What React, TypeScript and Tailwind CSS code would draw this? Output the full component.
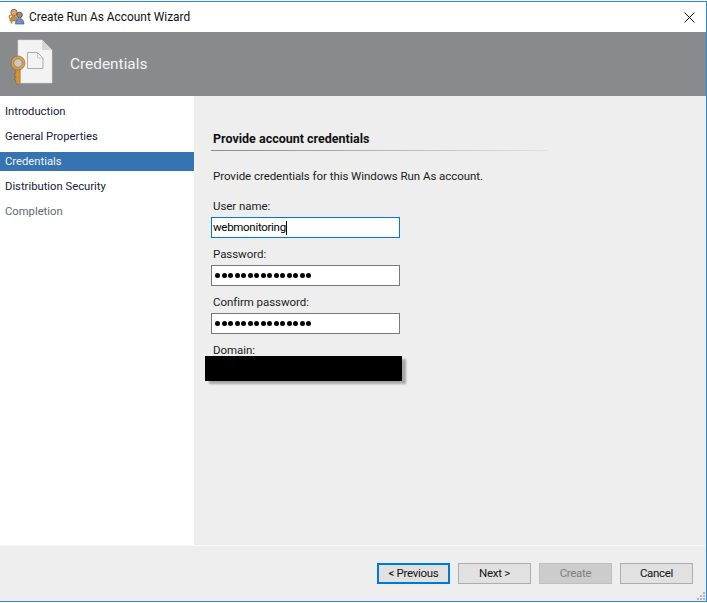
const font = { fontFamily: 'Roboto, "Noto Sans", sans-serif' };

const steps = ["Introduction", "General Properties", "Credentials", "Distribution Security", "Completion"];

function WizardIcon() {
  return (
    <svg width="17" height="17" viewBox="0 0 17 17" className="shrink-0">
      <circle cx="6" cy="4.500" r="3.200" fill="#d8a878" stroke="#7d5a34" strokeWidth="0.8" />
      <path d="M2 13c0-3 1.500-4.800 4-4.800s3.600 1.600 3.600 4.800z" fill="#b9925f" stroke="#7d5a34" strokeWidth="0.6" />
      <circle cx="11.500" cy="7" r="2.800" fill="#a98870" stroke="#4a4040" strokeWidth="0.8" />
      <path d="M7.500 16c0-3.600 1.600-5.500 4-5.500s4.500 1.900 4.500 5.500z" fill="#6d93c4" stroke="#3f5f8c" strokeWidth="0.7" />
      <circle cx="3.500" cy="9" r="2.200" fill="none" stroke="#c58a2a" strokeWidth="1.300" />
      <path d="M3.500 11.200v4.300" stroke="#c58a2a" strokeWidth="1.600" />
    </svg>
  );
}

function HeaderIcon() {
  return (
    <svg width="46" height="48" viewBox="0 0 46 48" className="shrink-0">
      <path d="M9 1h24l10 10v33H9z" fill="#f3f3f3" stroke="#d4d4d4" strokeWidth="0.5" />
      <path d="M33 1v10h10z" fill="#d6d6d6" />
      <path d="M18.500 13.500h10l5.500 5.500v10.500H18.500z" fill="#f3f3f3" stroke="#a9abad" strokeWidth="1" />
      <path d="M28.500 13.500v5.500H34" fill="none" stroke="#c0c2c4" strokeWidth="0.8" />
      <path d="M6.800 29h4.400v14.500L9 46l-2.200-2.200v-3h-1.300v-2h1.300v-2h-1.300v-2h1.300z" fill="#d6933a" stroke="#8f5f20" strokeWidth="0.6" />
      <circle cx="9" cy="24" r="5.600" fill="none" stroke="#d9a050" strokeWidth="2.600" />
      <circle cx="9" cy="24" r="7" fill="none" stroke="#8f5f20" strokeWidth="0.6" />
      <circle cx="9" cy="24" r="4.200" fill="#c9c9c9" stroke="#8f5f20" strokeWidth="0.6" />
    </svg>
  );
}

function Field({ label, value, focused, secret }: { label: string; value: string; focused?: boolean; secret?: boolean }) {
  return (
    <div className="flex flex-col">
      <div className="h-[20px] pl-[2px] text-[11.5px] leading-[19px] tracking-[-0.05px] text-[#1c1c1c]">{label}</div>
      <div
        className={`flex h-[21px] w-[189px] items-center border bg-white pl-[1px] text-[11.5px] tracking-[-0.3px] text-black ${
          focused ? "border-[#0078d7]" : "border-[#7a7a7a]"
        }`}
      >
        {secret ? (
          <span className="flex gap-[1.500px] pl-[2px]">
            {Array.from({ length: 15 }).map((_, i) => (
              <span key={i} className="h-[5px] w-[5px] rounded-full bg-black" />
            ))}
          </span>
        ) : (
          value
        )}
        {focused && <span className="h-[14px] w-px bg-black" />}
      </div>
    </div>
  );
}

function WizardButton({ label, primary, disabled }: { label: string; primary?: boolean; disabled?: boolean }) {
  return (
    <div
      className={`flex h-[21px] w-[73px] items-center justify-center pt-px text-[11.5px] tracking-[-0.3px] ${
        primary
          ? "border-2 border-[#0078d7] bg-[#e1e1e1] text-[#111]"
          : disabled
            ? "border border-[#bfbfbf] bg-[#cccccc] text-[#808080]"
            : "border border-[#adadad] bg-[#e1e1e1] text-[#111]"
      }`}
    >
      {label}
    </div>
  );
}

export default function App() {
  return (
    <div className="relative h-[603px] w-[707px] bg-white pt-px" style={font}>
      <div className="flex h-[601px] flex-col border-t border-r border-b border-[#2b88d8]">
        <div className="flex h-[30px] shrink-0 items-center justify-between bg-white pr-[11px] pl-[8px]">
          <div className="flex items-center gap-[4px]">
            <WizardIcon />
            <span className="pt-px text-[11.9px] text-[#111]">Create Run As Account Wizard</span>
          </div>
          <svg width="11" height="11" viewBox="0 0 11 11">
            <path d="M.5.5l10 10M10.500.5l-10 10" stroke="#111" strokeWidth="1" fill="none" />
          </svg>
        </div>

        <div className="flex h-[64px] shrink-0 items-start bg-[#888b8d] pt-[7px] pl-[9px]">
          <HeaderIcon />
          <span className="mt-[15px] ml-[15px] text-[15.4px] leading-[20px] text-[#eef4f8]">Credentials</span>
        </div>

        <div className="flex min-h-0 flex-1 border-b border-[#f8f8f8]">
          <div className="flex w-[194px] shrink-0 flex-col gap-[6px] bg-white pt-[6px]">
            {steps.map((step) => (
              <div
                key={step}
                className={`flex h-[19px] items-center pt-px pl-[5px] text-[11.25px] ${
                  step === "Credentials"
                    ? "bg-[#3574b0] text-[#eef3f8]"
                    : step === "Completion"
                      ? "text-[#5c6c70]"
                      : "text-[#152238]"
                }`}
              >
                {step}
              </div>
            ))}
          </div>

          <div className="flex-1 bg-[#eeeeee] pt-[33px] pl-[17px]">
            <div className="h-[21px] w-[337px] pl-[2px] text-[12.5px] leading-[20px] font-bold text-[#111]">
              Provide account credentials
            </div>
            <div className="h-px w-[337px] bg-gradient-to-r from-[#8a8a8a] to-[#e2e2e2]" />
            <div className="mt-[17px] pl-[2px] text-[11.5px] leading-[17px] tracking-[-0.05px] text-[#1c1c1c]">
              Provide credentials for this Windows Run As account.
            </div>
            <div className="mt-[12px] flex flex-col gap-[7px]">
              <Field label="User name:" value="webmonitoring" focused />
              <Field label="Password:" value="" secret />
              <Field label="Confirm password:" value="" secret />
              <div className="pl-[2px] text-[11.5px] leading-[19px] tracking-[-0.05px] text-[#1c1c1c]">Domain:</div>
            </div>
          </div>
        </div>

        <div className="flex h-[55px] shrink-0 items-start justify-end gap-[8px] bg-[#eeeeee] pt-[17px] pr-[13px]">
          <WizardButton label="< Previous" primary />
          <WizardButton label="Next >" />
          <WizardButton label="Create" disabled />
          <WizardButton label="Cancel" />
        </div>
      </div>

      {/* redaction over the domain field */}
      <div className="absolute top-[356px] left-[205px] h-[25px] w-[197px] bg-black shadow-[4px_3px_2px_rgba(0,0,0,0.3)]" />

      {/* resize grip */}
      <svg width="8" height="8" viewBox="0 0 8 8" className="absolute top-[592px] left-[697px]" fill="#b4b4b4">
        <rect x="6" y="0" width="2" height="2" />
        <rect x="3" y="3" width="2" height="2" />
        <rect x="6" y="3" width="2" height="2" />
        <rect x="0" y="6" width="2" height="2" />
        <rect x="3" y="6" width="2" height="2" />
        <rect x="6" y="6" width="2" height="2" />
      </svg>
    </div>
  );
}
